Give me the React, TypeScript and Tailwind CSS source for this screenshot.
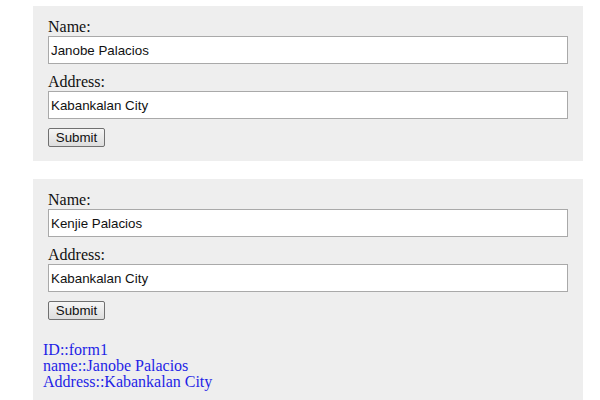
import React from "react";

type Entry = { name: string; address: string };

function Field({ label, value }: { label: string; value: string }) {
  return (
    <div className="flex flex-col">
      <label className="h-[18px] text-[16px] leading-[18px] text-[#111]">{label}</label>
      <input
        readOnly
        value={value}
        className="h-[28px] w-[520px] border border-[#a9a9a9] bg-white px-[2px] font-['Liberation_Sans',Arial,sans-serif] text-[13.33px] text-[#111] outline-none"
      />
    </div>
  );
}

function PersonForm({ entry, children }: { entry: Entry; children?: React.ReactNode }) {
  return (
    <form className="w-[550px] bg-[#eeeeee] pt-[12px] pb-[14px] pl-[15px] pr-[15px]">
      <div className="flex flex-col gap-[9px]">
        <Field label="Name:" value={entry.name} />
        <Field label="Address:" value={entry.address} />
        <div className="flex">
          <button
            type="button"
            className="h-[19px] w-[57px] rounded-[2px] border border-[#707070] bg-gradient-to-b from-[#f6f6f6] to-[#dddddd] font-['Liberation_Sans',Arial,sans-serif] text-[13.33px] leading-[17px] text-[#111]"
          >
            Submit
          </button>
        </div>
      </div>
      {children}
    </form>
  );
}

export default function App() {
  const first: Entry = { name: "Janobe Palacios", address: "Kabankalan City" };
  const second: Entry = { name: "Kenjie Palacios", address: "Kabankalan City" };

  return (
    <div className="h-[400px] w-[600px] overflow-hidden bg-white pl-[33px] pt-[6px] font-['Liberation_Serif','Times_New_Roman',serif]">
      <div className="flex flex-col gap-[18px]">
        <PersonForm entry={first} />
        <PersonForm entry={second}>
          {/* last submitted values */}
          <div className="-ml-[5px] mt-[22px] pb-[20px] text-[16px] leading-[16px] text-[#1f1fe6]">
            <div>ID::form1</div>
            <div>name::{first.name}</div>
            <div>Address::{first.address}</div>
          </div>
        </PersonForm>
      </div>
    </div>
  );
}
